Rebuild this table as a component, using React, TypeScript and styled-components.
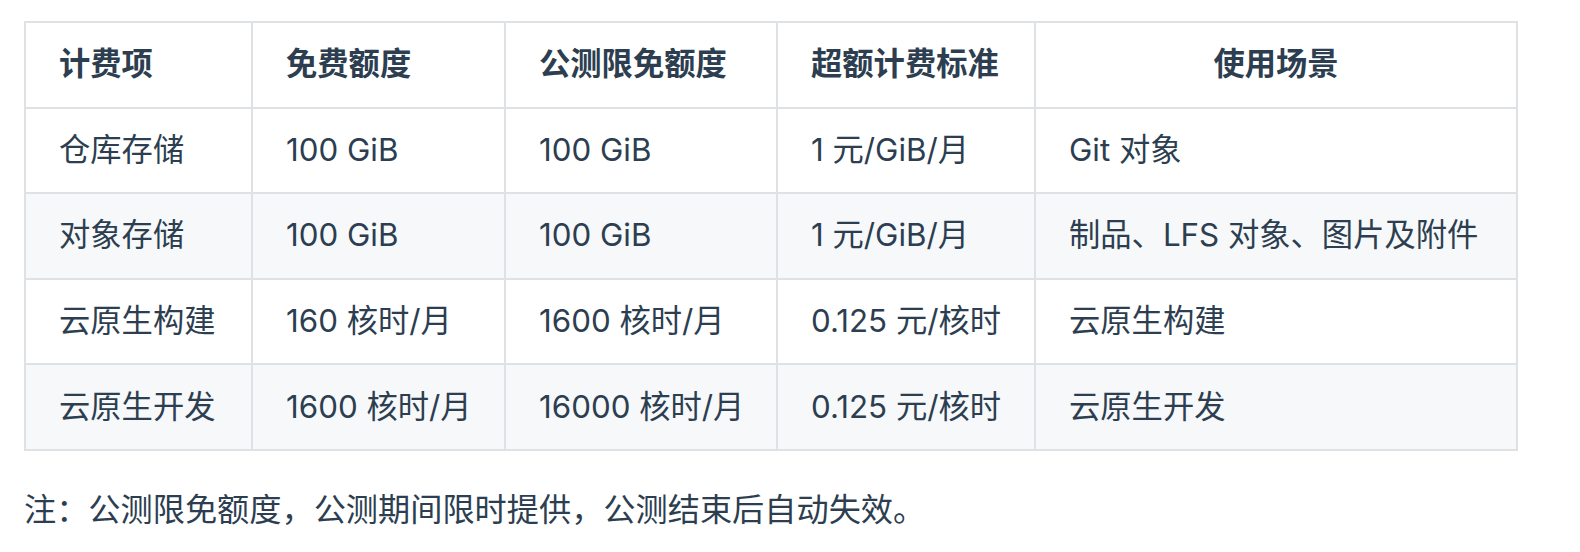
import React from "react";
import styled, { createGlobalStyle } from "styled-components";

const GlobalStyle = createGlobalStyle`
  html, body {
    margin: 0;
    padding: 0;
    background: #ffffff;
  }
  body {
    font-family: Inter, "Noto Sans CJK SC", sans-serif;
    color: #2c3e50;
  }
`;

const Page = styled.div`
  padding: 21px 24px 0 24px;
  font-size: 31.3px;
  line-height: 47px;
`;

const Table = styled.table`
  border-collapse: collapse;
  table-layout: fixed;
  width: 1492px;
`;

const HeadCell = styled.th<{ $center?: boolean }>`
  border: 2px solid #dfe2e5;
  padding: 18.3px 33px;
  font-weight: 700;
  text-align: ${(p) => (p.$center ? "center" : "left")};
  white-space: nowrap;
`;

const Row = styled.tr<{ $striped?: boolean }>`
  background: ${(p) => (p.$striped ? "#f6f8fa" : "#ffffff")};
`;

const Cell = styled.td`
  border: 2px solid #dfe2e5;
  padding: 18.3px 33px;
  white-space: nowrap;
`;

const Note = styled.p`
  margin: 35px 0 0 0;
  font-size: 32.2px;
  text-spacing-trim: space-all;
`;

const widths = [227, 253, 272, 258, 482];

const headers = ["计费项", "免费额度", "公测限免额度", "超额计费标准", "使用场景"];

const rows: string[][] = [
  ["仓库存储", "100 GiB", "100 GiB", "1 元/GiB/月", "Git 对象"],
  ["对象存储", "100 GiB", "100 GiB", "1 元/GiB/月", "制品、LFS 对象、图片及附件"],
  ["云原生构建", "160 核时/月", "1600 核时/月", "0.125 元/核时", "云原生构建"],
  ["云原生开发", "1600 核时/月", "16000 核时/月", "0.125 元/核时", "云原生开发"],
];

export default function App() {
  return (
    <>
      <GlobalStyle />
      <Page>
        <Table>
          <colgroup>
            {widths.map((w, i) => (
              <col key={i} style={{ width: w }} />
            ))}
          </colgroup>
          <thead>
            <Row>
              {headers.map((h, i) => (
                <HeadCell key={h} $center={i === headers.length - 1}>
                  {h}
                </HeadCell>
              ))}
            </Row>
          </thead>
          <tbody>
            {rows.map((r, i) => (
              <Row key={r[0]} $striped={i % 2 === 1}>
                {r.map((c, j) => (
                  <Cell key={j}>{c}</Cell>
                ))}
              </Row>
            ))}
          </tbody>
        </Table>
        <Note>注：公测限免额度，公测期间限时提供，公测结束后自动失效。</Note>
      </Page>
    </>
  );
}
